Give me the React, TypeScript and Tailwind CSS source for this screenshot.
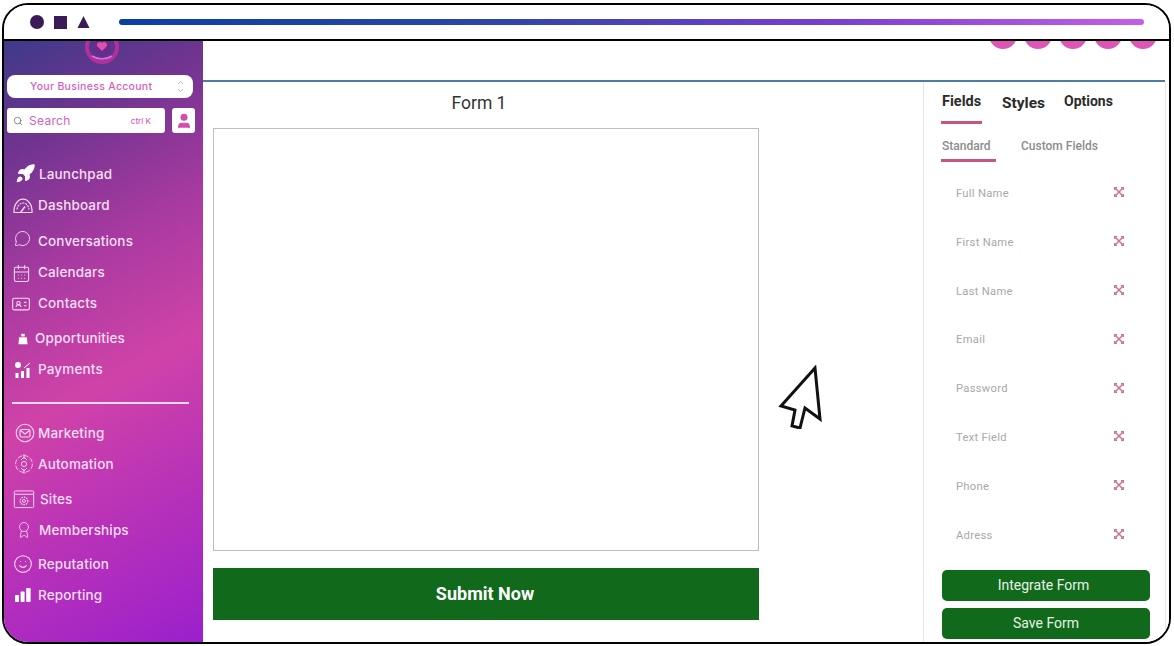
import { Rocket, MessageCircle, CalendarDays, IdCard, Award, Smile, Search, ChevronUp, ChevronDown, User } from "lucide-react";
import type { ReactNode } from "react";

const stroke = { strokeWidth: 1.3, className: "w-[18px] h-[18px]" };

const Dome = () => (
  <svg viewBox="0 0 20 16" className="w-[20px] h-[16px]" fill="none" stroke="#f6d9f2" strokeWidth="1.2" strokeLinejoin="round">
    <path d="M1 14.5C0.5 6.5 5 1.2 10 1.2s9.5 5.3 9 13.3z" />
    <path d="M4 11.5C4.5 7.5 7 5 10 5s5.5 2.5 6 6.5" strokeDasharray="2 1" />
    <path d="M7.5 14.5L12 8.5" strokeWidth="1.4" />
  </svg>
);
const Bag = () => (
  <svg viewBox="0 0 14 14" className="w-[12px] h-[12px]" fill="#fff">
    <path d="M5 1h4v3H5z" />
    <path d="M2.5 5h9l.8 8H1.7z" />
  </svg>
);
const Pay = () => (
  <svg viewBox="0 0 18 18" className="w-[18px] h-[18px]" fill="#fff">
    <circle cx="4" cy="4" r="3" />
    <rect x="1.5" y="12" width="3" height="5" />
    <rect x="7" y="10" width="3" height="7" />
    <rect x="12.5" y="7" width="3" height="10" />
    <path d="M10 7l6-5" stroke="#fff" strokeWidth="1" />
  </svg>
);
const Mkt = () => (
  <svg viewBox="0 0 20 20" className="w-[20px] h-[20px]" fill="none" stroke="#f6d9f2" strokeWidth="1.1">
    <circle cx="10" cy="10" r="8.8" />
    <rect x="5" y="6.5" width="10" height="7.5" rx="1.6" />
    <path d="M5.5 7.5l4.5 3.5 4.5-3.5" />
  </svg>
);
const Auto = () => (
  <svg viewBox="0 0 20 22" className="w-[20px] h-[22px]" fill="none" stroke="#f0c8ea" strokeWidth="1">
    <circle cx="10" cy="11" r="8.4" strokeDasharray="5 1.5" />
    <circle cx="10" cy="11" r="2.6" />
    <path d="M10 1v5M10 16v5M7 7l3-3 3 3M7 15l3 3 3-3" />
  </svg>
);
const Site = () => (
  <svg viewBox="0 0 22 20" className="w-[22px] h-[19px]" fill="none" stroke="#f6d9f2" strokeWidth="1">
    <rect x="0.8" y="1" width="20.4" height="17.5" rx="1.2" />
    <path d="M1 4.5h20" />
    <circle cx="11" cy="11.5" r="1.6" />
    <circle cx="11" cy="11.5" r="4" strokeDasharray="1.6 1" strokeWidth="1.3" />
  </svg>
);
const Rep = () => (
  <svg viewBox="0 0 16 14" className="w-[16px] h-[14px]" fill="#fff">
    <rect x="0" y="7" width="4" height="7" rx="0.7" />
    <rect x="5.6" y="3.5" width="4" height="10.5" rx="0.7" />
    <rect x="11.2" y="0" width="4.4" height="14" rx="0.7" />
  </svg>
);
const Move = () => (
  <svg viewBox="0 0 10 10" className="w-[10px] h-[10px] -mt-[2px]" fill="none" stroke="#cf7396" strokeWidth="1.5">
    <path d="M1.5 1.5l7 7M8.5 1.5l-7 7" />
    <path d="M0 0h3v1.5H1.5V3H0zM10 0H7v1.5h1.5V3H10zM0 10h3V8.5H1.5V7H0zM10 10H7V8.5h1.5V7H10z" fill="#cf7396" stroke="none" />
  </svg>
);

type Item = { label: string; icon: ReactNode; row: string };
const groupA: Item[] = [
  { label: "Launchpad", row: "mt-[31px] pl-[11px] gap-[3px]", icon: <Rocket fill="#fff" stroke="#fff" strokeWidth={1.1} className="w-[21px] h-[21px] -mt-[3px]" /> },
  { label: "Dashboard", row: "mt-[10px] pl-[9px] gap-[5px]", icon: <Dome /> },
  { label: "Conversations", row: "mt-[15px] pl-[10px] gap-[7px]", icon: <MessageCircle {...stroke} className="w-[17px] h-[17px] -mt-[6px]" /> },
  { label: "Calendars", row: "mt-[10px] pl-[8px] gap-[7px]", icon: <CalendarDays {...stroke} className="w-[19px] h-[19px] mt-[2px]" /> },
  { label: "Contacts", row: "mt-[10px] pl-[7px] gap-[7px]", icon: <IdCard {...stroke} className="w-[20px] h-[20px] mt-[1px]" /> },
  { label: "Opportunities", row: "mt-[14px] pl-[13px] gap-[6px]", icon: <Bag /> },
  { label: "Payments", row: "mt-[10px] pl-[10px] gap-[6px]", icon: <Pay /> },
];
const groupB: Item[] = [
  { label: "Marketing", row: "mt-[19px] pl-[11px] gap-[3px]", icon: <Mkt /> },
  { label: "Automation", row: "mt-[10px] pl-[10px] gap-[4px]", icon: <Auto /> },
  { label: "Sites", row: "mt-[14px] pl-[9px] gap-[5px]", icon: <Site /> },
  { label: "Memberships", row: "mt-[10px] pl-[11px] gap-[6px]", icon: <Award {...stroke} strokeWidth={1.1} /> },
  { label: "Reputation", row: "mt-[13px] pl-[9px] gap-[5px]", icon: <Smile {...stroke} className="w-[20px] h-[20px]" /> },
  { label: "Reporting", row: "mt-[10px] pl-[11px] gap-[7px]", icon: <Rep /> },
];

const fields = ["Full Name", "First Name", "Last Name", "Email", "Password", "Text Field", "Phone", "Adress"];

function NavRow({ item }: { item: Item }) {
  return (
    <div className={`flex items-center h-[21px] text-[13.5px] font-medium tracking-[0.15px] text-[#f9dff4] ${item.row}`}>
      <span className="flex justify-center text-[#f6d9f2]">{item.icon}</span>
      <span>{item.label}</span>
    </div>
  );
}

export default function App() {
  return (
    <div className="w-[1174px] h-[646px] bg-white pt-[3px] pb-[2px] pl-[2px] pr-[3px] font-['Inter',sans-serif]">
      <div className="w-full h-full rounded-[26px] border-[2.5px] border-black overflow-hidden flex flex-col">
        <div className="h-[36px] shrink-0 border-b-[2px] border-black flex items-center pl-[26px] pr-[25px] bg-white">
          <span className="w-[14px] h-[14px] rounded-full bg-[#3a1b57]" />
          <span className="w-[13px] h-[13px] bg-[#3a1b57] ml-[10px]" />
          <svg viewBox="0 0 12 12" className="w-[13px] h-[12px] ml-[10px]" fill="#3a1b57"><path d="M6 0l6 12H0z" /></svg>
          <div className="ml-[29px] flex-1 h-[6px] rounded-full bg-[linear-gradient(90deg,#0c3fa4_0%,#2a45a8_35%,#7a3fd0_70%,#c35fe8_100%)]" />
        </div>

        <div className="flex-1 min-h-0 flex">
          <aside className="w-[199px] shrink-0 flex flex-col bg-[linear-gradient(152deg,#3e3a88_0%,#6f3490_16%,#a83aa0_36%,#cf43a8_56%,#b832b8_76%,#9b20cc_100%)]">
            <div className="h-[24px] flex justify-center overflow-hidden pr-[4px]">
              <svg viewBox="0 0 36 36" className="w-[36px] h-[36px] -mt-[12px] shrink-0" fill="none">
                <circle cx="18" cy="18" r="15" stroke="#b52f9c" strokeWidth="4" />
                <circle cx="18" cy="18" r="9" fill="#6a2c8a" />
                <path d="M18 22l-5-5a3 3 0 0 1 5-3 3 3 0 0 1 5 3z" fill="#e04fb0" />
                <path d="M8 27q10 6 20 0" stroke="#e070e0" strokeWidth="1.6" />
              </svg>
            </div>
            <div className="ml-[3px] mt-[10px] w-[186px] h-[23px] rounded-[8px] bg-white flex items-center pl-[23px] pr-[8px] text-[10.5px] font-medium tracking-[0.3px] text-[#d45fc0]">
              <span className="flex-1">Your Business Account</span>
              <span className="flex flex-col text-[#999]"><ChevronUp size={9} className="-mb-[1px]" /><ChevronDown size={9} /></span>
            </div>
            <div className="mt-[10px] ml-[3px] flex gap-[7px]">
              <div className="w-[158px] h-[25px] rounded-[3px] bg-white flex items-center pl-[6px] pr-[14px] text-[#d45fc0]">
                <Search size={10} className="text-[#777]" />
                <span className="ml-[6px] flex-1 text-[12px] tracking-[0.3px]">Search</span>
                <span className="text-[8px] font-medium">ctrl K</span>
              </div>
              <div className="w-[23px] h-[25px] rounded-[3px] bg-white flex items-center justify-center text-[#d04fae]">
                <User size={18} fill="#d04fae" strokeWidth={1.5} />
              </div>
            </div>
            {groupA.map((i) => <NavRow key={i.label} item={i} />)}
            <div className="mt-[22px] ml-[8px] w-[177px] h-[1.5px] bg-[#f3d9f3]" />
            {groupB.map((i) => <NavRow key={i.label} item={i} />)}
          </aside>

          <div className="flex-1 min-w-0 flex flex-col bg-white">
            <div className="h-[41px] shrink-0 border-b-[2px] border-[#4a7ea8] overflow-hidden flex justify-end gap-[7px] mr-[4px] pr-[8px]">
              {[0, 1, 2, 3, 4].map((n) => (
                <span key={n} className="w-[28px] h-[28px] rounded-full bg-[#dd55b5] -mt-[20px]" />
              ))}
            </div>
            <div className="flex-1 min-h-0 flex">
              <main className="w-[720px] shrink-0 pl-[10px] flex">
                <div className="w-[546px] shrink-0 flex flex-col">
                  <div className="h-[46px] pt-[10px] text-center pr-[14px] text-[17.5px] leading-[22px] text-[#333] font-['Roboto',sans-serif]">Form 1</div>
                  <div className="h-[423px] border border-[#bdbdbd] bg-white" />
                  <div className="mt-[17px] h-[52px] pb-[2px] pr-[2px] bg-[#116a1b] flex items-center justify-center text-white font-bold text-[18px] font-['Roboto',sans-serif]">Submit Now</div>
                </div>
                <div className="flex-1 flex">
                  <svg viewBox="0 0 44 64" className="w-[44px] h-[64px] ml-[19px] mt-[283px]" fill="#fff" stroke="#111" strokeWidth="3" strokeLinejoin="miter">
                    <path d="M37 3L3 41l14 4-3 16 8 2 5-20 15 11z" />
                  </svg>
                </div>
              </main>
              <section className="flex-1 min-w-0 border-l border-r border-[#e6e6e6] mr-[3px] pl-[18px] pr-[13px] flex flex-col font-['Roboto',sans-serif]">
                <div className="flex items-start pt-[10px] h-[41px] font-bold text-[14.5px] text-[#2b2b2b] leading-[20px]">
                  <div className="w-[60px]"><span>Fields</span><div className="mt-[9px] w-[41px] h-[2.5px] bg-[#c8557f] -ml-[1px]" /></div>
                  <span className="w-[62px] pt-[1px] text-[15.5px]">Styles</span>
                  <span className="text-[14px] -mt-[1px]">Options</span>
                </div>
                <div className="flex h-[40px] pt-[15px] text-[12px] font-medium text-[#8c8c8c] leading-[16px]">
                  <div className="w-[79px]"><span>Standard</span><div className="mt-[5px] w-[55px] h-[2.5px] bg-[#c8557f] -ml-[1px]" /></div>
                  <span>Custom Fields</span>
                </div>
                <div className="flex flex-col mt-[6px]">
                  {fields.map((f) => (
                    <div key={f} className="h-[48.8px] shrink-0 pl-[14px] pr-[28px] flex items-center justify-between text-[11.2px] tracking-[0.3px] text-[#a8a8a8]">
                      <span className="pt-[2px]">{f}</span>
                      <Move />
                    </div>
                  ))}
                </div>
                <div className="mt-[11px] flex flex-col gap-[7px] w-[208px]">
                  <div className="h-[31px] rounded-[5px] pr-[5px] bg-[#116a1b] flex items-center justify-center text-[#e6f2e6] text-[14px]">Integrate Form</div>
                  <div className="h-[31px] rounded-[5px] bg-[#116a1b] flex items-center justify-center text-[#e6f2e6] text-[14px]">Save Form</div>
                </div>
              </section>
            </div>
          </div>
        </div>
      </div>
    </div>
  );
}
